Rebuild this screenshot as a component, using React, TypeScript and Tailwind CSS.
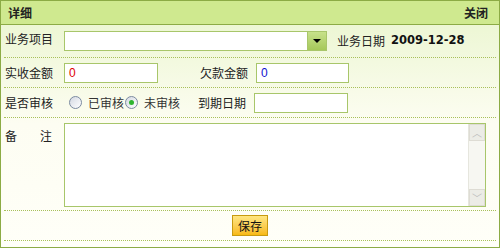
import React from 'react';

const font = { fontFamily: '"Noto Sans CJK SC", "Liberation Sans", sans-serif' };

const Radio: React.FC<{ checked?: boolean }> = ({ checked }) => (
  <span className="flex w-[13px] h-[13px] rounded-full border border-[#7b8aa0] bg-gradient-to-br from-[#d4d9e2] to-white items-center justify-center shrink-0">
    {checked && <span className="w-[5px] h-[5px] rounded-full bg-[#2fb52f]" />}
  </span>
);

const Label: React.FC<{ children: React.ReactNode; className?: string }> = ({ children, className }) => (
  <span className={`text-[12px] text-[#222] ${className ?? ''}`}>{children}</span>
);

export default function App() {
  return (
    <div className="w-[500px] h-[248px] border border-[#8cab45] bg-gradient-to-b from-[#e9f5cd] via-[#fdfdf2] to-[#fffff8] flex flex-col" style={font}>
      <div className="h-[24px] bg-[#cfe98f] border-b border-[#8cab45] flex items-center justify-between px-[7px] shrink-0">
        <span className="text-[12px] font-bold text-[#222]">详细</span>
        <span className="text-[12px] font-bold text-[#222] pr-[4px]">关闭</span>
      </div>

      <div className="px-[3px] flex flex-col">
        {/* row 1 */}
        <div className="h-[33px] flex items-center border-b border-dotted border-[#a8c05a]">
          <Label className="w-[60px] pl-[1px] -mt-[4px]">业务项目</Label>
          <div className="flex h-[20px] w-[263px] border border-[#a8c66a] bg-white">
            <div className="flex-1" />
            <div className="w-[19px] h-[18px] border-l border-[#a8c66a] bg-gradient-to-b from-[#c7e18a] to-[#a6c85a] flex items-center justify-center">
              <span className="w-0 h-0 border-l-[4px] border-r-[4px] border-t-[4px] border-l-transparent border-r-transparent border-t-black" />
            </div>
          </div>
          <Label className="ml-[10px]">业务日期</Label>
          <span className="ml-[6px] font-bold text-[#111]" style={{ fontFamily: '"DejaVu Sans", sans-serif', fontSize: '11.5px' }}>2009-12-28</span>
        </div>

        {/* row 2 */}
        <div className="h-[30px] flex items-center border-b border-dotted border-[#a8c05a]">
          <Label className="w-[60px] pl-[1px]">实收金额</Label>
          <div className="w-[94px] h-[20px] border border-[#a8c66a] bg-white flex items-center pl-[4px] text-[12px] text-[#e00000]" style={{ fontFamily: '"Liberation Sans", sans-serif' }}>0</div>
          <Label className="ml-[42px] w-[56px]">欠款金额</Label>
          <div className="w-[93px] h-[20px] border border-[#a8c66a] bg-white flex items-center pl-[4px] text-[12px] text-[#1010d0]" style={{ fontFamily: '"Liberation Sans", sans-serif' }}>0</div>
        </div>

        {/* row 3 */}
        <div className="h-[30px] flex items-center border-b border-dotted border-[#a8c05a]">
          <Label className="w-[65px] pl-[1px]">是否审核</Label>
          <Radio />
          <Label className="ml-[6px] text-[#333]">已审核</Label>
          <span className="ml-[1px] flex items-center"><Radio checked /></span>
          <Label className="ml-[6px] text-[#333]">未审核</Label>
          <Label className="ml-[18px] w-[56px]">到期日期</Label>
          <div className="w-[94px] h-[20px] border border-[#a8c66a] bg-white" />
        </div>

        {/* row 4 */}
        <div className="h-[93px] flex items-start pt-[5px] border-b border-dotted border-[#a8c05a]">
          <Label className="w-[60px] pl-[1px] pt-[4px] flex justify-between pr-[12px]"><span>备</span><span>注</span></Label>
          <div className="w-[422px] h-[84px] border border-[#a8c66a] bg-white flex justify-end">
            <div className="w-[17px] h-full bg-[#f7f7f2] border-l border-[#e6e6de] flex flex-col justify-between">
              <div className="h-[17px] bg-[#ecece6] border border-[#dedcd4] flex items-center justify-center text-[#bbb] text-[10px] leading-none">︿</div>
              <div className="h-[17px] bg-[#ecece6] border border-[#dedcd4] flex items-center justify-center text-[#bbb] text-[10px] leading-none">﹀</div>
            </div>
          </div>
        </div>

        {/* row 5 */}
        <div className="h-[30px] flex items-center justify-center border-b border-dotted border-[#a8c05a]">
          <button className="w-[36px] h-[21px] border border-[#c89a10] bg-gradient-to-b from-[#ffe680] to-[#f7b90c] text-[12px] text-[#111] leading-none">保存</button>
        </div>
      </div>
    </div>
  );
}
